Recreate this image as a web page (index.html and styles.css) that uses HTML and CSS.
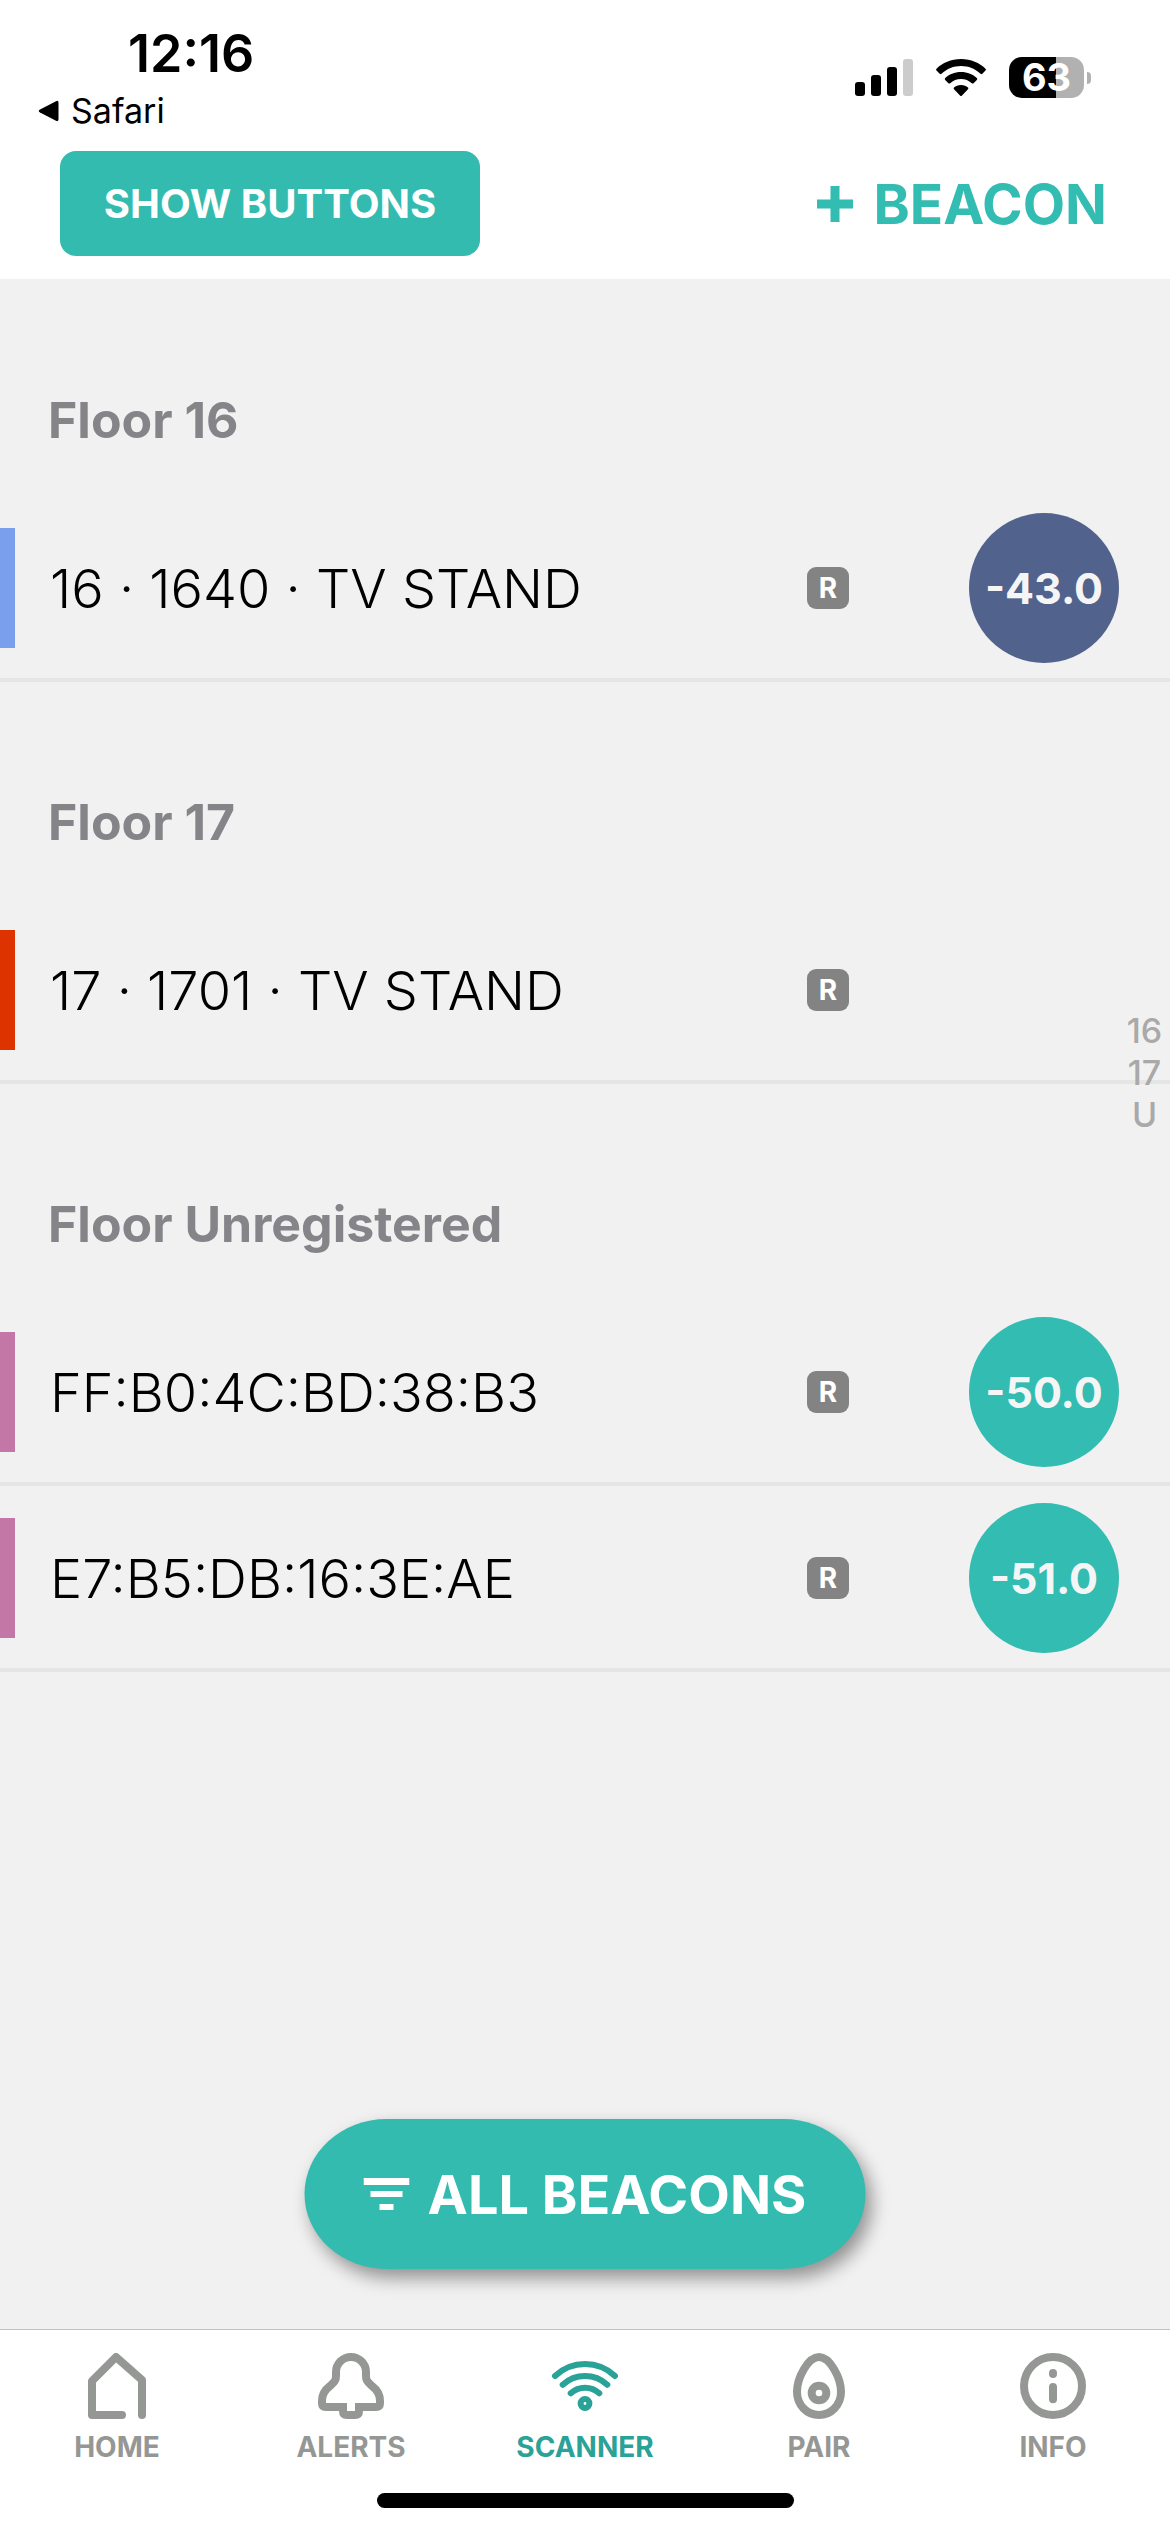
FILE: index.html
```html
<!DOCTYPE html>
<html lang="en">
<head>
<meta charset="utf-8">
<meta name="viewport" content="width=device-width, initial-scale=1">
<title>Scanner</title>
<link rel="stylesheet" href="styles.css">
</head>
<body>
<header class="header">
  <div class="status">
    <div class="status-left">
      <time class="clock">12:16</time>
      <a class="back" href="#">
        <svg class="back-icon" viewBox="0 0 21 22" aria-hidden="true"><path d="M2 9.500 18 1.200Q20.500 0 20.500 3V19Q20.500 22 18 20.800L2 12.500Q-.5 11 2 9.500Z"/></svg>
        Safari
      </a>
    </div>
    <div class="status-right">
      <svg class="signal" viewBox="0 0 58 38" aria-hidden="true"><rect y="23" width="10" height="14" rx="3"/><rect x="16" y="16" width="10" height="21" rx="3"/><rect x="32" y="8" width="10" height="29" rx="3"/><rect x="48" width="10" height="37" rx="3" fill="#ccc"/></svg>
      <svg class="wifi" viewBox="0 0 50 38" aria-hidden="true"><path d="M25 0C35 0 43.500 3.800 49.500 9.700Q50.300 10.700 49.500 11.500L46.300 14.800Q45.500 15.600 44.500 14.700C39 9.700 32.500 7 25 7S11 9.700 5.500 14.700Q4.500 15.600 3.700 14.800L.5 11.500Q-.3 10.700 .5 9.700C6.500 3.800 15 0 25 0Z"/><path d="M25 13C31.500 13 37 15.400 40.800 19Q41.800 20 40.800 21L37.600 24.200Q36.800 25 35.800 24.200C32.800 21.500 29.200 20 25 20S17.200 21.500 14.200 24.200Q13.200 25 12.400 24.200L9.200 21Q8.200 20 9.200 19C13 15.400 18.500 13 25 13Z"/><path d="M25 26C28 26 30.300 27 32 28.600Q32.800 29.400 32 30.200L26 36.600Q25 37.600 24 36.600L18 30.200Q17.200 29.400 18 28.600C19.700 27 22 26 25 26Z"/></svg>
      <div class="battery"><span class="battery-level">63</span></div>
    </div>
  </div>
  <div class="toolbar">
    <button class="show-buttons" type="button">SHOW BUTTONS</button>
    <button class="add-beacon" type="button"><svg class="plus-icon" viewBox="0 0 36 36" aria-hidden="true"><path d="M13.500 0h9v13.500H36v9H22.500V36h-9V22.500H0v-9h13.500z"/></svg>BEACON</button>
  </div>
</header>

<main class="content">
  <section>
    <h2 class="floor">Floor 16</h2>
    <ul class="beacons">
      <li class="beacon blue"><span class="name">16 · 1640 · TV STAND</span><span class="tag">R</span><span class="rssi strong">-43.0</span></li>
    </ul>
  </section>
  <section>
    <h2 class="floor">Floor 17</h2>
    <ul class="beacons">
      <li class="beacon red"><span class="name">17 · 1701 · TV STAND</span><span class="tag">R</span><span class="rssi none"></span></li>
    </ul>
  </section>
  <section>
    <h2 class="floor">Floor Unregistered</h2>
    <ul class="beacons">
      <li class="beacon pink"><span class="name">FF:B0:4C:BD:38:B3</span><span class="tag">R</span><span class="rssi">-50.0</span></li>
      <li class="beacon pink"><span class="name">E7:B5:DB:16:3E:AE</span><span class="tag">R</span><span class="rssi">-51.0</span></li>
    </ul>
  </section>
  <nav class="index" aria-label="Floors"><a href="#">16</a><a href="#">17</a><a href="#">U</a></nav>
  <button class="filter" type="button">
    <svg class="filter-icon" viewBox="0 0 46 32" aria-hidden="true"><path d="M0 0h46v7H0zM7 13h32v6H7zM16 26h14v6H16z"/></svg>
    ALL BEACONS
  </button>
</main>

<footer class="footer">
  <nav class="tabs">
    <a class="tab" href="#"><svg class="tab-icon" viewBox="0 0 66 66" aria-hidden="true"><path stroke-linecap="round" d="M38 62H8V28L32 4 58 27V62"/></svg>HOME</a>
    <a class="tab" href="#"><svg class="tab-icon" viewBox="0 0 66 66" aria-hidden="true"><path d="M28 54H8Q4 54 4 50V48C4 40 8 36 12 33 16 29 18 28 18 23V19A15 15 0 0 1 48 19V23C48 28 50 29 54 33 58 36 62 40 62 48V50Q62 54 58 54H38"/><path d="M25 50V58Q25 62 29 62H37Q41 62 41 58V50"/></svg>ALERTS</a>
    <a class="tab active" href="#"><svg class="tab-icon thin" viewBox="0 0 66 66" aria-hidden="true"><path stroke-linecap="round" d="M3 23A43.500 43.500 0 0 1 63 23M10.700 31.700A33 33 0 0 1 55.300 31.700M18.700 40.300A21 21 0 0 1 47.300 40.300"/><circle cx="33" cy="50.500" r="4.400"/></svg>SCANNER</a>
    <a class="tab" href="#"><svg class="tab-icon" viewBox="0 0 66 66" aria-hidden="true"><path d="M33 4C44 4 55 25 55 39 55 52 45 62 33 62S11 52 11 39C11 25 22 4 33 4Z"/><circle cx="33" cy="40" r="7.300"/></svg>PAIR</a>
    <a class="tab" href="#"><svg class="tab-icon" viewBox="0 0 66 66" aria-hidden="true"><circle cx="33" cy="33" r="29"/><path stroke-linecap="round" d="M33 20V21M33 34V46.300"/></svg>INFO</a>
  </nav>
  <div class="home-indicator"></div>
</footer>
</body>
</html>
```
FILE: styles.css
```css
* {
  box-sizing: border-box;
}

body {
  margin: 0;
  min-height: 100vh;
  display: flex;
  flex-direction: column;
  background: #f1f1f1;
  color: #000;
  font-family: Inter, "Liberation Sans", sans-serif;
}

a {
  color: inherit;
  text-decoration: none;
}

button {
  border: 0;
  padding: 0;
  font-family: inherit;
  font-weight: 700;
  cursor: pointer;
}

.header {
  background: #fff;
  padding-bottom: 23px;
}

/* Status bar */
.status {
  display: flex;
  justify-content: space-between;
  align-items: flex-start;
  padding: 24px 79px 20px 38px;
}

.status-left {
  display: flex;
  flex-direction: column;
  gap: 7px;
}

.clock {
  padding-left: 90px;
  font-size: 52px;
  line-height: 60px;
  font-weight: 600;
}

.back {
  display: flex;
  align-items: center;
  gap: 12px;
  font-size: 34px;
  line-height: 40px;
}

.back-icon {
  width: 21px;
  height: 22px;
}

.status-right {
  display: flex;
  align-items: center;
  gap: 23px;
  padding-top: 33px;
}

.signal {
  width: 58px;
  height: 38px;
}

.wifi {
  width: 50px;
  height: 38px;
}

.battery {
  display: flex;
  align-items: center;
  gap: 3px;
}

.battery-level {
  width: 75px;
  border-radius: 13px;
  background: linear-gradient(90deg, #000 63%, #b1b1b1 63%);
  color: #fff;
  font-size: 38px;
  line-height: 41px;
  font-weight: 700;
  text-align: center;
}

.battery::after {
  content: "";
  width: 4px;
  height: 12px;
  border-radius: 0 4px 4px 0;
  background: #b1b1b1;
}

/* Toolbar */
.toolbar {
  display: flex;
  justify-content: space-between;
  align-items: center;
  padding: 0 63px 0 60px;
}

.show-buttons {
  height: 105px;
  min-width: 420px;
  border-radius: 16px;
  background: #33bbb0;
  color: #fff;
  font-size: 40px;
}

.add-beacon {
  display: flex;
  align-items: center;
  gap: 20px;
  background: none;
  color: #32bcb2;
  font-size: 55px;
}

.plus-icon {
  width: 36px;
  height: 36px;
  fill: currentColor;
}

/* Beacon list */
.content {
  position: relative;
  flex: 1;
  padding: 1px 0 240px;
}

.floor {
  margin: 0;
  padding: 112px 48px 48px;
  color: #858489;
  font-size: 50px;
  line-height: 56px;
  font-weight: 700;
}

.beacons {
  margin: 0;
  padding: 0;
  list-style: none;
}

.beacon {
  display: flex;
  align-items: center;
  padding: 17px 51px 15px 0;
  border-bottom: 4px solid #e5e5e5;
}

.beacon::before {
  content: "";
  width: 15px;
  height: 120px;
}

.blue::before {
  background: #7a9fec;
}

.red::before {
  background: #dd3300;
}

.pink::before {
  background: #c377a6;
}

.name {
  flex: 1;
  padding-left: 35px;
  font-size: 54px;
  font-weight: 300;
}

.tag {
  width: 42px;
  margin-right: 120px;
  border-radius: 9px;
  background: #838383;
  color: #fff;
  font-size: 28px;
  line-height: 42px;
  font-weight: 700;
  text-align: center;
}

.rssi {
  width: 150px;
  height: 150px;
  border-radius: 50%;
  background: #32bcb2;
  color: #f5f5f5;
  font-size: 43px;
  line-height: 150px;
  font-weight: 700;
  text-align: center;
}

.strong {
  background: #51628c;
}

.none {
  background: none;
}

.index {
  position: absolute;
  top: 731px;
  right: 0;
  width: 51px;
  display: flex;
  flex-direction: column;
  color: #a9a9a9;
  font-size: 34px;
  line-height: 42px;
  font-weight: 500;
  text-align: center;
}

.filter {
  position: absolute;
  bottom: 60px;
  left: 50%;
  transform: translateX(-50%);
  display: flex;
  align-items: center;
  justify-content: center;
  gap: 18px;
  height: 150px;
  min-width: 561px;
  padding: 0 40px;
  border-radius: 82px / 75px;
  background: #33bbb0;
  box-shadow: 6px 9px 18px rgba(0, 0, 0, 0.4);
  color: #fff;
  font-size: 54px;
  white-space: nowrap;
}

.filter-icon {
  width: 46px;
  height: 32px;
  fill: currentColor;
}

/* Tab bar */
.footer {
  background: #fff;
  border-top: 1px solid #c0c0c0;
  padding: 23px 0 24px;
}

.tabs {
  display: flex;
}

.tab {
  flex: 1;
  display: flex;
  flex-direction: column;
  align-items: center;
  gap: 12px;
  color: #959795;
  font-size: 28px;
  line-height: 32px;
  font-weight: 700;
}

.active {
  color: #2aa297;
}

.tab-icon {
  width: 66px;
  height: 66px;
  fill: none;
  stroke: currentColor;
  stroke-width: 8;
  stroke-linejoin: round;
}

.thin {
  stroke-width: 6;
}

.home-indicator {
  width: 417px;
  height: 15px;
  margin: 30px auto 0;
  border-radius: 8px;
  background: #000;
}
```
